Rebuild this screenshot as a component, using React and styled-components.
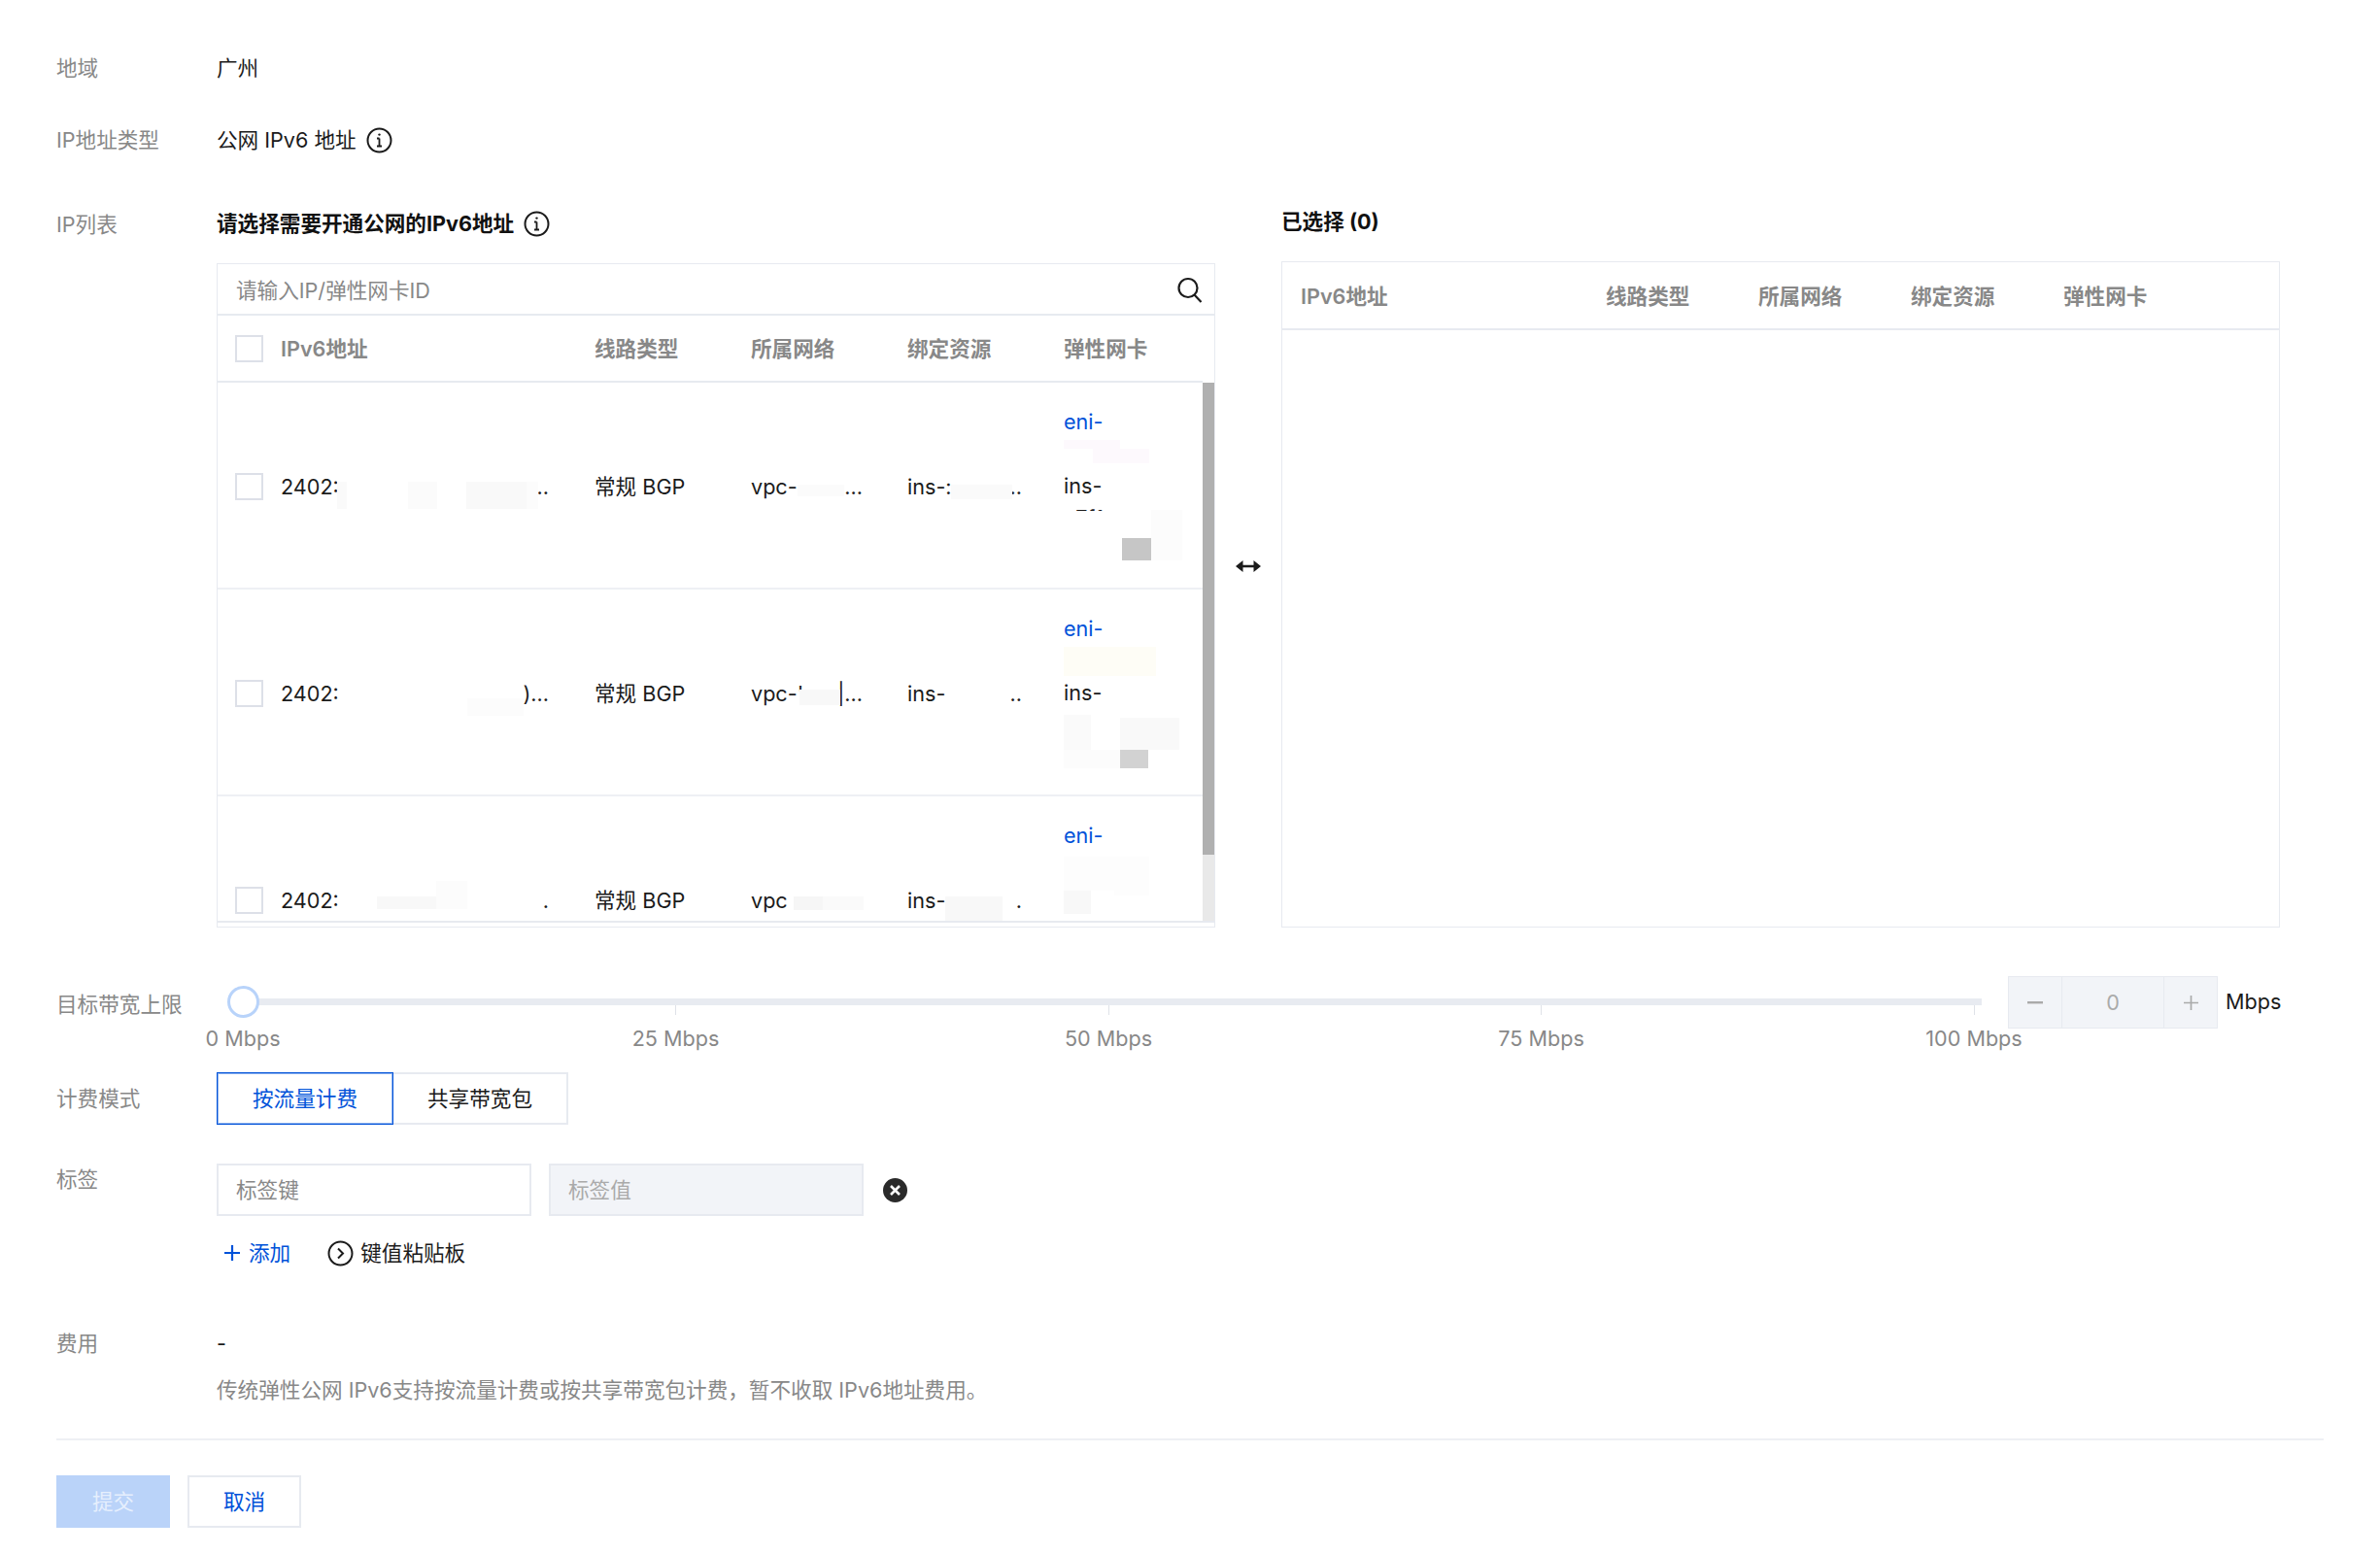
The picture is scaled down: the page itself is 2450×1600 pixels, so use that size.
import React from "react";
import styled, { createGlobalStyle } from "styled-components";

const BLUE = "#0052d9";
const LINE = "#e7eaf0";

const Global = createGlobalStyle`
  html, body {
    margin: 0;
    padding: 0;
    background: #fff;
  }
  body {
    font-family: Inter, "Noto Sans CJK SC", sans-serif;
    font-size: 21.6px;
    line-height: 32px;
    color: #1b1b1b;
  }
  * { box-sizing: border-box; }
`;

const Page = styled.div`
  width: 2450px;
  height: 1600px;
  padding: 54px 58px 0;
  overflow: hidden;
`;

const Row = styled.div`
  display: flex;
  align-items: flex-start;
  margin-top: ${(p) => p.$top || 0}px;
`;

const Label = styled.div`
  width: 165px;
  flex: none;
  color: #888;
  margin-top: ${(p) => p.$offset || 0}px;
`;

const Value = styled.div`
  display: flex;
  align-items: center;
  gap: 10px;
`;

const Panels = styled.div`
  display: flex;
  align-items: flex-start;
`;

const Panel = styled.div`
  width: 1028px;
  margin-top: ${(p) => p.$shift || 0}px;
`;

const PanelTitle = styled.div`
  display: flex;
  align-items: center;
  gap: 10px;
  font-weight: 700;
  color: #111;
  height: 32px;
  margin-bottom: 25px;
`;

const ArrowSlot = styled.div`
  width: 68px;
  height: 741px;
  display: flex;
  align-items: flex-end;
  justify-content: center;
  padding-bottom: 366px;
`;

const Box = styled.div`
  border: 1px solid ${LINE};
  height: ${(p) => p.$height}px;
  overflow: hidden;
`;

const SearchBar = styled.div`
  height: 53px;
  display: flex;
  align-items: center;
  justify-content: space-between;
  padding: 2px 12px 0 19px;
  border-bottom: 2px solid ${LINE};
`;

const SearchInput = styled.input`
  flex: 1;
  border: none;
  outline: none;
  background: none;
  padding: 0;
  font: inherit;
  color: #1b1b1b;
  &::placeholder { color: #888; opacity: 1; }
`;

const HeadRow = styled.div`
  display: grid;
  grid-template-columns: ${(p) => p.$cols};
  align-items: center;
  height: ${(p) => p.$height}px;
  margin-right: ${(p) => p.$gutter || 0}px;
  padding-top: 1px;
  border-bottom: 2px solid ${LINE};
  color: #888;
  font-weight: 600;
`;

const HeadCell = styled.div`
  padding-left: 16px;
`;

const RightHeadCell = styled(HeadCell)`
  padding-left: 19px;
`;

const CheckCell = styled.div`
  display: flex;
  align-items: center;
  gap: 18px;
  padding-left: 18px;
`;

const Checkbox = styled.span`
  display: block;
  flex: none;
  width: 29px;
  height: 28px;
  border: 2px solid #dde0e8;
  background: #fff;
`;

const ListArea = styled.div`
  display: flex;
  height: 556px;
  border-bottom: 2px solid ${LINE};
`;

const Rows = styled.div`
  flex: 1;
  overflow: hidden;
`;

const TrackBar = styled.div`
  width: 12px;
  flex: none;
  background: #e9e9e9;
`;

const Thumb = styled.div`
  height: 486px;
  background: #b0b0b0;
`;

const DataRow = styled.div`
  position: relative;
  display: grid;
  grid-template-columns: 372px 161px 161px 161px 1fr;
  align-items: center;
  height: 213px;
  padding-top: 2px;
  border-bottom: 2px solid #eef0f4;
`;

const DataCell = styled.div`
  padding-left: 16px;
`;

const Clipped = styled.div`
  display: flex;
  justify-content: space-between;
  width: ${(p) => p.$width}px;
  white-space: nowrap;
`;

const Line = styled.div`
  height: 33px;
  color: ${(p) => (p.$link ? BLUE : "inherit")};
`;

const PeekLine = styled.div`
  height: 9px;
  margin-bottom: 24px;
  overflow: hidden;
  white-space: nowrap;
`;

/* 打码色块，盖在表格文字上面 */
const Patch = styled.i`
  position: absolute;
  left: ${(p) => p.$x}px;
  top: ${(p) => p.$y}px;
  width: ${(p) => p.$w}px;
  height: ${(p) => p.$h}px;
  background: ${(p) => p.$c};
`;

const SliderBlock = styled.div`
  width: 1790px;
  flex: none;
  margin: 23px 27px 0 27px;
`;

const Rail = styled.div`
  position: relative;
  height: 7px;
  background: #e8ebf1;
`;

const Knob = styled.span`
  position: absolute;
  left: -16px;
  top: -13px;
  width: 33px;
  height: 33px;
  border-radius: 50%;
  border: 3px solid #b8d3fa;
  background: #fff;
`;

const Marks = styled.div`
  display: flex;
  justify-content: space-between;
  padding-right: 8px;
`;

const Mark = styled.div`
  width: 0;
  display: flex;
  flex-direction: column;
  align-items: center;
  white-space: nowrap;
  color: #888;
  &::before {
    content: "";
    width: 1px;
    height: 10px;
    background: #dfe2e8;
    margin-bottom: 8px;
    flex: none;
  }
`;

const Stepper = styled.div`
  display: flex;
  height: 54px;
  width: 216px;
  flex: none;
  border: 1px solid ${LINE};
  background: #f2f4f8;
`;

const StepBtn = styled.div`
  width: 54px;
  display: flex;
  align-items: center;
  justify-content: center;
  flex: none;
`;

const StepValue = styled.div`
  flex: 1;
  text-align: center;
  line-height: 52px;
  color: #aaa;
  border-left: 1px solid ${LINE};
  border-right: 1px solid ${LINE};
`;

const Unit = styled.div`
  line-height: 52px;
  margin-left: 8px;
`;

const Segments = styled.div`
  display: flex;
`;

const Segment = styled.div`
  height: 54px;
  width: ${(p) => p.$width}px;
  display: flex;
  align-items: center;
  justify-content: center;
  border: ${(p) => (p.$on ? `1px solid ${BLUE}` : `2px solid ${LINE}`)};
  border-left-width: ${(p) => (p.$on ? 1 : 0)}px;
  box-shadow: ${(p) => (p.$on ? "inset 0 0 0 1px rgba(0, 82, 217, 0.45)" : "none")};
  color: ${(p) => (p.$on ? BLUE : "#1b1b1b")};
`;

const TagGroup = styled.div`
  display: flex;
  align-items: center;
  gap: 18px;
`;

const TagInput = styled.input`
  width: 324px;
  height: 54px;
  padding: 0 18px;
  border: 2px solid ${LINE};
  outline: none;
  font: inherit;
  background: ${(p) => (p.disabled ? "#f2f4f8" : "#fff")};
  &::placeholder {
    color: ${(p) => (p.disabled ? "#aaa" : "#888")};
    opacity: 1;
  }
`;

const Remove = styled.span`
  display: flex;
  margin-left: 2px;
`;

const LinkRow = styled.div`
  display: flex;
  align-items: center;
  margin-left: 165px;
  margin-top: 22px;
  padding-left: 8px;
`;

const AddLink = styled.div`
  display: flex;
  align-items: center;
  gap: 9px;
  color: ${BLUE};
  margin-right: 38px;
`;

const PasteLink = styled.div`
  display: flex;
  align-items: center;
  gap: 7px;
`;

const Hint = styled.div`
  color: #888;
  margin: 16px 0 0 165px;
`;

const Divider = styled.div`
  height: 2px;
  background: #eef0f4;
  margin-top: 34px;
`;

const Actions = styled.div`
  display: flex;
  gap: 18px;
  margin-top: 36px;
`;

const Btn = styled.div`
  width: 117px;
  height: 54px;
  display: flex;
  align-items: center;
  justify-content: center;
  background: ${(p) => (p.$primary ? "#bad3f9" : "#fff")};
  border: ${(p) => (p.$primary ? "none" : `2px solid ${LINE}`)};
  color: ${(p) => (p.$primary ? "#e6effd" : BLUE)};
`;

const InfoIcon = () => (
  <svg width="27" height="27" viewBox="0 0 27 27" fill="none" stroke="#1b1b1b" strokeWidth="2">
    <circle cx="13.5" cy="13.5" r="12" />
    <path d="M13.5 11.5v8M11 11.5h2.5M11 19.5h5" strokeWidth="1.8" />
    <circle cx="13.5" cy="7.6" r="1.2" fill="#1b1b1b" stroke="none" />
  </svg>
);

const SearchIcon = () => (
  <svg width="27" height="27" viewBox="0 0 27 27" fill="none" stroke="#1b1b1b" strokeWidth="2.2">
    <circle cx="12" cy="11.5" r="9.5" />
    <path d="M18.5 18.5l7 7.5" />
  </svg>
);

const SwapIcon = () => (
  <svg width="26" height="12" viewBox="0 0 26 12" fill="#1b1b1b">
    <path d="M0 6L7.5 0v4.8h11V0L26 6l-7.5 6V7.2h-11V12z" />
  </svg>
);

const MinusIcon = () => (
  <svg width="16" height="3" viewBox="0 0 16 3"><rect width="16" height="2.4" fill="#aaa" /></svg>
);

const PlusIcon = ({ color, size, weight }) => (
  <svg width={size} height={size} viewBox="0 0 16 16" stroke={color} strokeWidth={weight} fill="none">
    <path d="M8 0v16M0 8h16" />
  </svg>
);

const CloseIcon = () => (
  <svg width="25" height="25" viewBox="0 0 25 25">
    <circle cx="12.5" cy="12.5" r="12.5" fill="#2a2a2a" />
    <path d="M8 8l9 9M17 8l-9 9" stroke="#fff" strokeWidth="2.6" />
  </svg>
);

const ChevronCircle = () => (
  <svg width="27" height="27" viewBox="0 0 27 27" fill="none" stroke="#1b1b1b" strokeWidth="2">
    <circle cx="13.5" cy="13.5" r="12" />
    <path d="M11 8.5l5 5-5 5" />
  </svg>
);

const leftCols = "372px 161px 161px 161px 1fr";
const rightCols = "314px 157px 157px 157px 1fr";
const columns = ["线路类型", "所属网络", "绑定资源", "弹性网卡"];
const marks = ["0 Mbps", "25 Mbps", "50 Mbps", "75 Mbps", "100 Mbps"];

// patches are [x, y, w, h, colour] in page pixels
const rows = [
  {
    top: 395,
    addr: ["2402:", ".."],
    vpc: ["vpc-", "..."],
    ins: ["ins-:", ".."],
    peek: "a7f1. t",
    patches: [
      [347, 497, 10, 28, "#fafafa"],
      [420, 497, 30, 28, "#fbfbfb"],
      [480, 497, 62, 28, "#f9f9f9"],
      [542, 497, 12, 28, "#fcfcfc"],
      [821, 500, 48, 12, "#fbfbfb"],
      [979, 500, 63, 15, "#fafafa"],
      [1095, 454, 58, 9, "#fdf9fd"],
      [1125, 463, 58, 15, "#fdf9fd"],
      [1155, 555, 30, 23, "#c6c6c6"],
      [1185, 526, 32, 52, "#fcfcfc"],
    ],
  },
  {
    top: 608,
    addr: ["2402:", ")..."],
    vpc: ["vpc-'", "|..."],
    ins: ["ins-", ".."],
    patches: [
      [481, 720, 58, 18, "#fcfcfc"],
      [823, 711, 42, 16, "#f8f8f8"],
      [1095, 667, 95, 30, "#fefdf6"],
      [1095, 737, 28, 36, "#fafafa"],
      [1153, 740, 61, 33, "#f9f9f9"],
      [1095, 773, 58, 19, "#fcfcfc"],
      [1153, 773, 29, 19, "#d2d2d2"],
    ],
  },
  {
    top: 821,
    addr: ["2402:", "."],
    vpc: ["vpc", ""],
    ins: ["ins-", "."],
    patches: [
      [388, 924, 61, 13, "#f8f8f8"],
      [449, 908, 32, 29, "#fcfcfc"],
      [817, 924, 30, 14, "#f6f6f6"],
      [847, 924, 42, 14, "#fafafa"],
      [973, 924, 59, 26, "#f8f8f8"],
      [1095, 883, 88, 40, "#fdfdfd"],
      [1095, 918, 28, 24, "#f8f8f8"],
      [1123, 918, 24, 24, "#ffffff"],
    ],
  },
];

export default function App() {
  return (
    <Page>
      <Global />

      <Row>
        <Label>地域</Label>
        <Value>广州</Value>
      </Row>

      <Row $top={42}>
        <Label>IP地址类型</Label>
        <Value>公网 IPv6 地址 <InfoIcon /></Value>
      </Row>

      <Row $top={54}>
        <Label $offset={1}>IP列表</Label>
        <Panels>
          <Panel>
            <PanelTitle>请选择需要开通公网的IPv6地址 <InfoIcon /></PanelTitle>
            <Box $height={684}>
              <SearchBar>
                <SearchInput placeholder="请输入IP/弹性网卡ID" readOnly />
                <SearchIcon />
              </SearchBar>
              <HeadRow $cols={leftCols} $height={69} $gutter={12}>
                <CheckCell><Checkbox />IPv6地址</CheckCell>
                {columns.map((c) => <HeadCell key={c}>{c}</HeadCell>)}
              </HeadRow>
              <ListArea>
                <Rows>
                  {rows.map((r) => (
                    <DataRow key={r.top}>
                      <CheckCell>
                        <Checkbox />
                        <Clipped $width={276}><span>{r.addr[0]}</span><span>{r.addr[1]}</span></Clipped>
                      </CheckCell>
                      <DataCell>常规 BGP</DataCell>
                      <DataCell>
                        <Clipped $width={115}><span>{r.vpc[0]}</span><span>{r.vpc[1]}</span></Clipped>
                      </DataCell>
                      <DataCell>
                        <Clipped $width={118}><span>{r.ins[0]}</span><span>{r.ins[1]}</span></Clipped>
                      </DataCell>
                      <DataCell>
                        <Line $link>eni-</Line>
                        <Line />
                        <Line>ins-</Line>
                        {r.peek ? <PeekLine>{r.peek}</PeekLine> : <Line />}
                        <Line />
                      </DataCell>
                      {r.patches.map(([x, y, w, h, c]) => (
                        <Patch key={`${x}-${y}`} $x={x - 224} $y={y - r.top} $w={w} $h={h} $c={c} />
                      ))}
                    </DataRow>
                  ))}
                </Rows>
                <TrackBar><Thumb /></TrackBar>
              </ListArea>
            </Box>
          </Panel>

          <ArrowSlot><SwapIcon /></ArrowSlot>

          <Panel $shift={-2}>
            <PanelTitle>已选择 (0)</PanelTitle>
            <Box $height={686}>
              <HeadRow $cols={rightCols} $height={70}>
                <RightHeadCell>IPv6地址</RightHeadCell>
                {columns.map((c) => <RightHeadCell key={c}>{c}</RightHeadCell>)}
              </HeadRow>
            </Box>
          </Panel>
        </Panels>
      </Row>

      <Row $top={50}>
        <Label $offset={13}>目标带宽上限</Label>
        <SliderBlock>
          <Rail><Knob /></Rail>
          <Marks>
            {marks.map((m) => <Mark key={m}>{m}</Mark>)}
          </Marks>
        </SliderBlock>
        <Stepper>
          <StepBtn><MinusIcon /></StepBtn>
          <StepValue>0</StepValue>
          <StepBtn><PlusIcon color="#aaa" size={15} weight={1.8} /></StepBtn>
        </Stepper>
        <Unit>Mbps</Unit>
      </Row>

      <Row $top={19}>
        <Label $offset={11}>计费模式</Label>
        <Segments>
          <Segment $on $width={182}>按流量计费</Segment>
          <Segment $width={180}>共享带宽包</Segment>
        </Segments>
      </Row>

      <Row $top={40}>
        <Label>标签</Label>
        <TagGroup>
          <TagInput placeholder="标签键" readOnly />
          <TagInput placeholder="标签值" disabled />
          <Remove><CloseIcon /></Remove>
        </TagGroup>
      </Row>

      <LinkRow>
        <AddLink><PlusIcon color={BLUE} size={16} weight={2.2} />添加</AddLink>
        <PasteLink><ChevronCircle />键值粘贴板</PasteLink>
      </LinkRow>

      <Row $top={61}>
        <Label>费用</Label>
        <Value>-</Value>
      </Row>
      <Hint>传统弹性公网 IPv6支持按流量计费或按共享带宽包计费，暂不收取 IPv6地址费用。</Hint>

      <Divider />

      <Actions>
        <Btn $primary>提交</Btn>
        <Btn>取消</Btn>
      </Actions>
    </Page>
  );
}
